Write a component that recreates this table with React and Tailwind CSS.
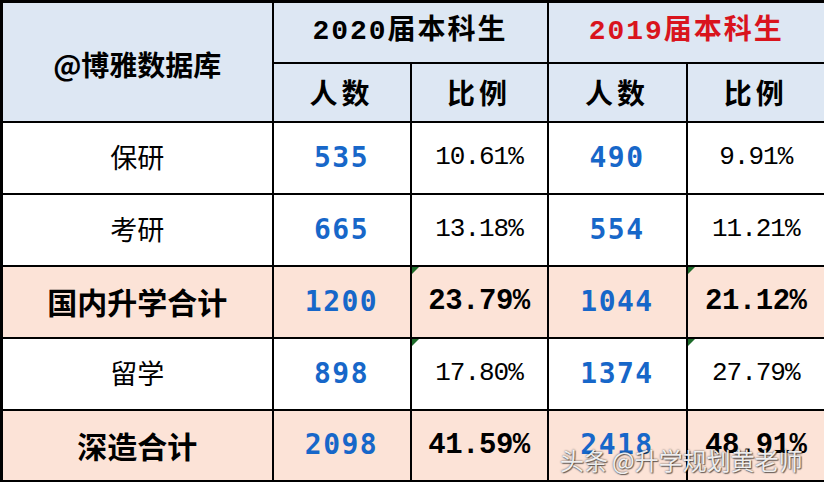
const rows = [
  { label: "保研", n20: "535", p20: "10.61%", n19: "490", p19: "9.91%" },
  { label: "考研", n20: "665", p20: "13.18%", n19: "554", p19: "11.21%" },
  { label: "国内升学合计", n20: "1200", p20: "23.79%", n19: "1044", p19: "21.12%", total: true, mark: true },
  { label: "留学", n20: "898", p20: "17.80%", n19: "1374", p19: "27.79%", mark: true },
  { label: "深造合计", n20: "2098", p20: "41.59%", n19: "2418", p19: "48.91%", total: true },
];

const cjk = "font-['Noto_Sans_CJK_SC',sans-serif]";
const mono = "font-['Liberation_Mono','Noto_Sans_CJK_SC',monospace]";
const blueNum = "font-['DejaVu_Sans_Mono',monospace] font-bold text-[28px] tracking-[1.5px] text-[#1767c9]";

function Mark() {
  return (
    <span className="absolute left-0 top-0 w-0 h-0 border-t-[7px] border-r-[7px] border-t-[#1d6b2a] border-r-transparent" />
  );
}

export default function App() {
  return (
    <div className="relative w-[824px] h-[482px] bg-white overflow-hidden">
      <table className="w-[824px] h-[482px] table-fixed border-collapse border-[3px] border-black text-center text-black">
        <colgroup>
          <col className="w-[271px]" />
          <col className="w-[138px]" />
          <col className="w-[137px]" />
          <col className="w-[139px]" />
          <col className="w-[139px]" />
        </colgroup>
        <thead className="bg-[#dde7f3]">
          <tr className="h-[61px]">
            <th rowSpan={2} className={`border-2 border-black ${cjk} font-bold text-[28px] pt-1`}>
              @博雅数据库
            </th>
            <th colSpan={2} className={`border-2 border-black ${mono} font-bold text-[28px] tracking-[2px]`}>
              2020届本科生
            </th>
            <th colSpan={2} className={`border-2 border-black ${mono} font-bold text-[28px] tracking-[2px] text-[#d9141d]`}>
              2019届本科生
            </th>
          </tr>
          <tr className={`h-[59px] ${cjk} font-bold text-[28px] tracking-[4px]`}>
            <th className="border-2 border-black">人数</th>
            <th className="border-2 border-black">比例</th>
            <th className="border-2 border-black">人数</th>
            <th className="border-2 border-black">比例</th>
          </tr>
        </thead>
        <tbody>
          {rows.map((r) => (
            <tr key={r.label} className={`h-[72px] ${r.total ? "bg-[#fce3d7]" : "bg-white"}`}>
              <td
                className={`border-2 border-black ${cjk} ${
                  r.total ? "font-bold text-[30px]" : "text-[27px]"
                }`}
              >
                {r.label}
              </td>
              <td className={`border-2 border-black ${blueNum}`}>{r.n20}</td>
              <td
                className={`relative border-2 border-black ${mono} ${
                  r.total ? "font-bold text-[29px] tracking-[-0.5px]" : "text-[26px] tracking-[-1px]"
                }`}
              >
                {r.mark && <Mark />}
                {r.p20}
              </td>
              <td className={`border-2 border-black ${blueNum}`}>{r.n19}</td>
              <td
                className={`relative border-2 border-black ${mono} ${
                  r.total ? "font-bold text-[29px] tracking-[-0.5px]" : "text-[26px] tracking-[-1px]"
                }`}
              >
                {r.mark && <Mark />}
                {r.p19}
              </td>
            </tr>
          ))}
        </tbody>
      </table>
      <div
        className={`absolute left-[560px] top-[442px] flex items-center gap-1 ${cjk} text-[24px] text-white/90 [text-shadow:0_0_2px_rgba(0,0,0,0.75),1px_1px_1px_rgba(0,0,0,0.5)]`}
      >
        <span>头条</span>
        <span>@升学规划黄老师</span>
      </div>
    </div>
  );
}
